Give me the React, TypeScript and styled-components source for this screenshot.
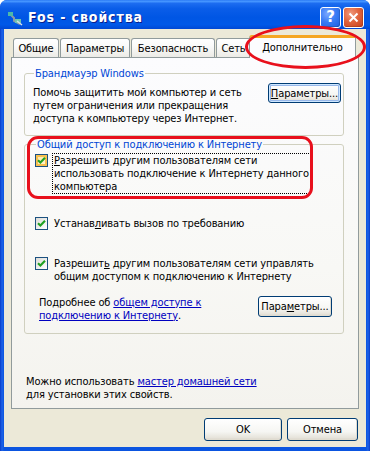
import React from 'react';
import styled, { createGlobalStyle } from 'styled-components';

const FONT = `"DejaVu Sans Condensed", "DejaVu Sans", sans-serif`;

const GlobalStyle = createGlobalStyle`
  html, body { margin: 0; padding: 0; background: #ffffff; }
  body { width: 370px; height: 451px; overflow: hidden; font-family: ${FONT}; font-size: 11px; letter-spacing: -0.12px; color: #000; }
  * { box-sizing: border-box; }
`;

const Window = styled.div`
  position: relative;
  width: 370px;
  height: 451px;
  display: flex;
  flex-direction: column;
  background: linear-gradient(to right, #0A3CC8 0px, #1E64E8 2px, #0B55E0 4px, #0B55E0 366px, #1E64E8 368px, #0A3CC8 370px);
  border-radius: 7px 7px 0 0;
  overflow: hidden;
`;

const TitleBar = styled.div`
  height: 29px;
  flex: none;
  display: flex;
  align-items: center;
  padding: 5px 6px 0 7px;
  background: linear-gradient(to bottom, #2C7BF5 0%, #4595FF 5%, #1C6CF0 12%, #0A5DE8 30%, #0056E4 60%, #0058E8 85%, #0048D4 100%);
`;

const TitleIcon = styled.svg`
  width: 16px;
  height: 16px;
  flex: none;
  margin-top: 1px;
`;

const TitleText = styled.div`
  margin-left: 5px;
  flex: 1;
  color: #ffffff;
  font-family: "DejaVu Sans Condensed", "DejaVu Sans", sans-serif;
  font-weight: bold;
  font-size: 14px;
  letter-spacing: 0.9px;
  text-shadow: 1px 1px 0 #0A1E8C;
`;

const CaptionButton = styled.div<{ $kind: 'help' | 'close' }>`
  width: 21px;
  height: 21px;
  margin-left: 2px;
  border: 1px solid #ffffff;
  border-radius: 3px;
  display: flex;
  align-items: center;
  justify-content: center;
  background: ${(p) =>
    p.$kind === 'close'
      ? 'radial-gradient(circle at 35% 30%, #F09A7E 0%, #E0643E 45%, #C6401B 100%)'
      : 'radial-gradient(circle at 35% 30%, #7BA8FF 0%, #3B7CF5 45%, #1C5EE0 100%)'};
  box-shadow: inset -1px -1px 0 rgba(0, 0, 0, 0.15);
`;

const HelpGlyph = styled.span`
  color: #ffffff;
  font-family: "DejaVu Sans", sans-serif;
  font-weight: bold;
  font-size: 15px;
  line-height: 1;
`;

const Body = styled.div`
  flex: 1;
  margin: 0 4px 4px;
  background: #ECE9D8;
  display: flex;
  flex-direction: column;
  padding-top: 6px;
`;

const TabStrip = styled.div`
  height: 22px;
  flex: none;
  display: flex;
  align-items: flex-end;
  padding-left: 9px;
  position: relative;
  z-index: 2;
`;

const Tab = styled.div<{ $w: number; $active?: boolean }>`
  width: ${(p) => p.$w}px;
  height: ${(p) => (p.$active ? 23 : 19)}px;
  margin-right: ${(p) => (p.$active ? 0 : 1)}px;
  margin-left: ${(p) => (p.$active ? -3 : 0)}px;
  margin-bottom: ${(p) => (p.$active ? -1 : 0)}px;
  border: 1px solid #919B9C;
  border-bottom: none;
  border-radius: 3px 3px 0 0;
  display: flex;
  align-items: center;
  justify-content: center;
  padding-bottom: ${(p) => (p.$active ? 2 : 0)}px;
  white-space: nowrap;
  overflow: hidden;
  background: ${(p) =>
    p.$active ? '#FCFCFE' : 'linear-gradient(to bottom, #FFFFFF 0%, #FAFAF9 40%, #ECEBE6 100%)'};
  border-top: ${(p) => (p.$active ? '3px solid #F5A623' : '1px solid #919B9C')};
  position: relative;
  z-index: ${(p) => (p.$active ? 3 : 1)};
`;

const Panel = styled.div`
  height: 352px;
  flex: none;
  margin: 0 7px;
  border: 1px solid #919B9C;
  background: linear-gradient(to bottom, #FCFCFE 0%, #F8F8F5 60%, #F4F3EE 100%);
  display: flex;
  flex-direction: column;
  padding: 0 14px 7px 12px;
  position: relative;
  z-index: 1;
`;

const Group = styled.fieldset<{ $top: number; $pad: string }>`
  margin: ${(p) => p.$top}px 0 0 0;
  padding: ${(p) => p.$pad};
  border: 1px solid #D0D0BF;
  border-radius: 3px;
  min-width: 0;
`;

const Legend = styled.legend`
  padding: 0 1px;
  margin-left: 1px;
  color: #0046D5;
  line-height: 13px;
`;

const FirewallRow = styled.div`
  display: flex;
  justify-content: space-between;
  align-items: flex-start;
`;

const Para = styled.div<{ $pt?: number }>`
  line-height: 13px;
  padding-top: ${(p) => p.$pt ?? 0}px;
  white-space: nowrap;
`;

const Button = styled.div<{ $w: number; $h?: number; $default?: boolean }>`
  width: ${(p) => p.$w}px;
  height: ${(p) => p.$h ?? 21}px;
  flex: none;
  border: 1px solid #003C74;
  border-radius: 3px;
  display: flex;
  align-items: center;
  justify-content: center;
  white-space: nowrap;
  background: linear-gradient(to bottom, #FFFFFF 0%, #F6F6F3 60%, #E6E3DA 90%, #D6D0C5 100%);
  box-shadow: ${(p) =>
    p.$default
      ? 'inset 0 0 0 1px #CEE7FF, inset 0 0 0 2px #98B8EA'
      : 'inset -1px -1px 0 #E0DCD0'};
`;

const Mn = styled.span`
  text-decoration: underline;
`;

const CheckRow = styled.div<{ $top: number }>`
  display: flex;
  align-items: flex-start;
  margin-top: ${(p) => p.$top}px;
`;

const Box = styled.div<{ $hot?: boolean }>`
  width: 13px;
  height: 13px;
  flex: none;
  margin-top: 1px;
  border: 1px solid #1C5180;
  display: flex;
  align-items: center;
  justify-content: center;
  background: ${(p) =>
    p.$hot
      ? 'linear-gradient(135deg, #FDE6A2 0%, #FFF6D8 100%)'
      : 'linear-gradient(135deg, #DCDCD7 0%, #FFFFFF 100%)'};
  box-shadow: ${(p) => (p.$hot ? 'inset 0 0 0 2px #F8C04E' : 'none')};
`;

const CheckLabel = styled.div<{ $focus?: boolean }>`
  margin-left: 4px;
  padding: 0 1px;
  line-height: 13px;
  border: 1px dotted ${(p) => (p.$focus ? '#000000' : 'transparent')};
  white-space: nowrap;
`;

const InfoRow = styled.div`
  display: flex;
  justify-content: space-between;
  align-items: flex-start;
  margin-top: 12px;
  padding-left: 4px;
  padding-right: 9px;
`;

const Link = styled.span`
  color: #0000C0;
  text-decoration: underline;
`;

const BottomNote = styled.div`
  margin-top: auto;
  margin-left: 2px;
  line-height: 13px;
  white-space: nowrap;
`;

const Footer = styled.div`
  display: flex;
  justify-content: flex-end;
  gap: 5px;
  padding: 9px 8px 0 0;
`;

const RedEllipse = styled.div`
  position: absolute;
  left: 245px;
  top: 25px;
  width: 121px;
  height: 44px;
  border: 3px solid #E8101C;
  border-radius: 50%;
  z-index: 10;
  pointer-events: none;
`;

const RedFrame = styled.div`
  position: absolute;
  left: 27px;
  top: 136px;
  width: 286px;
  height: 63px;
  border: 3px solid #E8101C;
  border-radius: 11px;
  z-index: 10;
  pointer-events: none;
`;

const Check = () => (
  <svg width="9" height="9" viewBox="0 0 9 9">
    <polyline points="1,4.2 3.4,6.6 8,1.8" fill="none" stroke="#21A121" strokeWidth="2.1" />
  </svg>
);

export default function App() {
  return (
    <>
      <GlobalStyle />
      <Window>
        <TitleBar>
          <TitleIcon viewBox="0 0 16 16">
            <path d="M2 3 L7 8 L7 11 L13 14" fill="none" stroke="#8A9AA8" strokeWidth="2" />
            <rect x="1" y="2" width="5" height="4" fill="#4FB8A8" />
            <rect x="8" y="9" width="6" height="4" fill="#6FC4B0" />
            <path d="M10 11 L15 15" stroke="#D8E0E8" strokeWidth="1.5" />
          </TitleIcon>
          <TitleText>Fos - свойства</TitleText>
          <CaptionButton $kind="help">
            <HelpGlyph>?</HelpGlyph>
          </CaptionButton>
          <CaptionButton $kind="close">
            <svg width="11" height="11" viewBox="0 0 11 11">
              <path d="M1.5 1.5 L9.5 9.5 M9.5 1.5 L1.5 9.5" stroke="#ffffff" strokeWidth="2" />
            </svg>
          </CaptionButton>
        </TitleBar>
        <Body>
          <TabStrip>
            <Tab $w={46}>Общие</Tab>
            <Tab $w={70}>Параметры</Tab>
            <Tab $w={84}>Безопасность</Tab>
            <Tab $w={35}>Сеть</Tab>
            <Tab $w={107} $active>Дополнительно</Tab>
          </TabStrip>
          <Panel>
            <Group $top={9} $pad="3px 2px 10px 8px">
              <Legend>Брандмауэр Windows</Legend>
              <FirewallRow>
                <Para $pt={2.5}>
                  Помочь защитить мой компьютер и сеть
                  <br />
                  путем ограничения или прекращения
                  <br />
                  доступа к компьютеру через Интернет.
                </Para>
                <Button $w={73} $h={20} $default>
                  <span>
                    <Mn>П</Mn>араметры...
                  </span>
                </Button>
              </FirewallRow>
            </Group>
            <Group $top={2} $pad="2px 2px 11px 10px">
              <Legend>Общий доступ к подключению к Интернету</Legend>
              <CheckRow $top={0}>
                <Box $hot>
                  <Check />
                </Box>
                <CheckLabel $focus>
                  <Mn>Р</Mn>азрешить другим пользователям сети
                  <br />
                  использовать подключение к Интернету данного
                  <br />
                  компьютера
                </CheckLabel>
              </CheckRow>
              <CheckRow $top={22}>
                <Box>
                  <Check />
                </Box>
                <CheckLabel>
                  Устанав<Mn>л</Mn>ивать вызов по требованию
                </CheckLabel>
              </CheckRow>
              <CheckRow $top={25}>
                <Box>
                  <Check />
                </Box>
                <CheckLabel>
                  Разрешит<Mn>ь</Mn> другим пользователям сети управлять
                  <br />
                  общим доступом к подключению к Интернету
                </CheckLabel>
              </CheckRow>
              <InfoRow>
                <Para>
                  Подробнее об <Link>общем доступе к</Link>
                  <br />
                  <Link>подключению к Интернету</Link>.
                </Para>
                <Button $w={74} $h={21}>
                  <span>
                    Пара<Mn>м</Mn>етры...
                  </span>
                </Button>
              </InfoRow>
            </Group>
            <BottomNote>
              Можно использовать <Link>мастер домашней сети</Link>
              <br />
              для установки этих свойств.
            </BottomNote>
          </Panel>
          <Footer>
            <Button $w={78} $h={23}>OK</Button>
            <Button $w={71} $h={23}>Отмена</Button>
          </Footer>
        </Body>
        <RedEllipse />
        <RedFrame />
      </Window>
    </>
  );
}
